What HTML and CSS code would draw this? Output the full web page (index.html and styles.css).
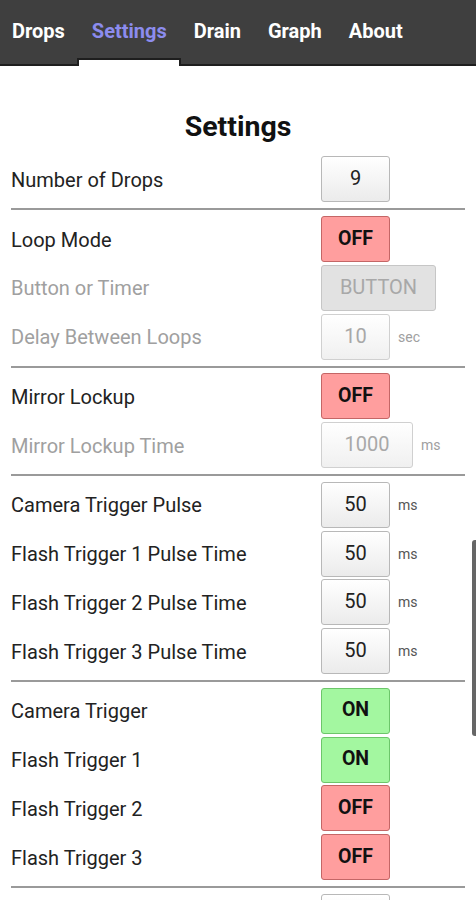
FILE: index.html
```html
<!DOCTYPE html>
<html lang="en">
<head>
  <meta charset="UTF-8">
  <title>Settings</title>
  <link rel="stylesheet" href="styles.css">
</head>
<body>
  <nav class="tabs">
    <div class="tab">Drops</div>
    <div class="tab active">Settings</div>
    <div class="tab">Drain</div>
    <div class="tab">Graph</div>
    <div class="tab">About</div>
  </nav>

  <div class="page">
    <h1>Settings</h1>

    <div class="row">
      <div class="label">Number of Drops</div>
      <div class="ctrl"><div class="btn">9</div></div>
    </div>
    <hr>

    <div class="row">
      <div class="label">Loop Mode</div>
      <div class="ctrl"><div class="btn off">OFF</div></div>
    </div>
    <div class="row disabled">
      <div class="label">Button or Timer</div>
      <div class="ctrl"><div class="btn grey wide">BUTTON</div></div>
    </div>
    <div class="row disabled">
      <div class="label">Delay Between Loops</div>
      <div class="ctrl"><div class="btn">10</div><span class="unit">sec</span></div>
    </div>
    <hr>

    <div class="row">
      <div class="label">Mirror Lockup</div>
      <div class="ctrl"><div class="btn off">OFF</div></div>
    </div>
    <div class="row disabled">
      <div class="label">Mirror Lockup Time</div>
      <div class="ctrl"><div class="btn mid">1000</div><span class="unit">ms</span></div>
    </div>
    <hr>

    <div class="row">
      <div class="label">Camera Trigger Pulse</div>
      <div class="ctrl"><div class="btn">50</div><span class="unit">ms</span></div>
    </div>
    <div class="row">
      <div class="label">Flash Trigger 1 Pulse Time</div>
      <div class="ctrl"><div class="btn">50</div><span class="unit">ms</span></div>
    </div>
    <div class="row">
      <div class="label">Flash Trigger 2 Pulse Time</div>
      <div class="ctrl"><div class="btn">50</div><span class="unit">ms</span></div>
    </div>
    <div class="row">
      <div class="label">Flash Trigger 3 Pulse Time</div>
      <div class="ctrl"><div class="btn">50</div><span class="unit">ms</span></div>
    </div>
    <hr>

    <div class="row">
      <div class="label">Camera Trigger</div>
      <div class="ctrl"><div class="btn on">ON</div></div>
    </div>
    <div class="row">
      <div class="label">Flash Trigger 1</div>
      <div class="ctrl"><div class="btn on">ON</div></div>
    </div>
    <div class="row">
      <div class="label">Flash Trigger 2</div>
      <div class="ctrl"><div class="btn off">OFF</div></div>
    </div>
    <div class="row">
      <div class="label">Flash Trigger 3</div>
      <div class="ctrl"><div class="btn off">OFF</div></div>
    </div>
    <hr>

    <div class="row">
      <div class="label">&nbsp;</div>
      <div class="ctrl"><div class="btn">&nbsp;</div></div>
    </div>
  </div>

  <div class="scroll-thumb"></div>
</body>
</html>
```

FILE: styles.css
```css
html, body {
  margin: 0;
  height: 100%;
  overflow: hidden;
}

body {
  font-family: Roboto, "Noto Sans", sans-serif;
  background: #fff;
  color: #222;
}

/* tab bar */
.tabs {
  display: flex;
  height: 64px;
  background: #3f3f3f;
  border-bottom: 2px solid #1e1e1e;
}

.tab {
  position: relative;
  display: flex;
  align-items: center;
  padding: 0 13.5px 3px;
  color: #fff;
  font-size: 20px;
  font-weight: bold;
}

.tab:first-child {
  padding-left: 12px;
}

.tab.active {
  color: #8c8cee;
}

.tab.active::after {
  content: "";
  position: absolute;
  left: -1px;
  right: -1px;
  bottom: -2px;
  height: 6px;
  background: #fff;
  border: 2px solid #1e1e1e;
  border-bottom: 0;
  border-radius: 1px 1px 0 0;
}

/* content */
.page {
  padding: 0 11px;
}

h1 {
  margin: 45px 0 12px;
  font-size: 28.5px;
  line-height: 32px;
  text-align: center;
  color: #111;
}

.row {
  display: grid;
  grid-template-columns: 310px 1fr;
  align-items: center;
  height: 48.75px;
}

.label {
  font-size: 20px;
  color: #222;
  padding-top: 1px;
}

.ctrl {
  display: flex;
  align-items: center;
  gap: 8px;
}

.btn {
  box-sizing: border-box;
  width: 69px;
  height: 46px;
  display: flex;
  align-items: center;
  justify-content: center;
  padding-bottom: 2px;
  border: 1px solid #b8b8b8;
  border-radius: 3px;
  background: linear-gradient(#ffffff, #ebebeb);
  font-size: 20px;
  color: #222;
}

.btn.wide { width: 115px; }
.btn.mid { width: 92px; }

.btn.off {
  background: #ff9e9e;
  border-color: #c46666;
  font-weight: bold;
  font-size: 19.5px;
  color: #111;
}

.btn.on {
  background: #a3f7a0;
  border-color: #6cc66a;
  font-weight: bold;
  font-size: 19.5px;
  color: #111;
}

.unit {
  font-size: 14px;
  color: #555;
}

.disabled .label,
.disabled .unit {
  color: #a0a0a0;
}

.disabled .btn {
  color: #a8a8a8;
  border-color: #d0d0d0;
  background: linear-gradient(#ffffff, #f0f0f0);
}

.disabled .btn.grey {
  background: #e2e2e2;
  border-color: #c6c6c6;
  color: #a8a8a8;
}

hr {
  margin: 4.5px 0;
  border: 0;
  height: 2px;
  background: #9a9a9a;
}

.scroll-thumb {
  position: absolute;
  right: 0;
  top: 540px;
  width: 4px;
  height: 196px;
  background: #666;
  border-radius: 3px 0 0 3px;
}
```
